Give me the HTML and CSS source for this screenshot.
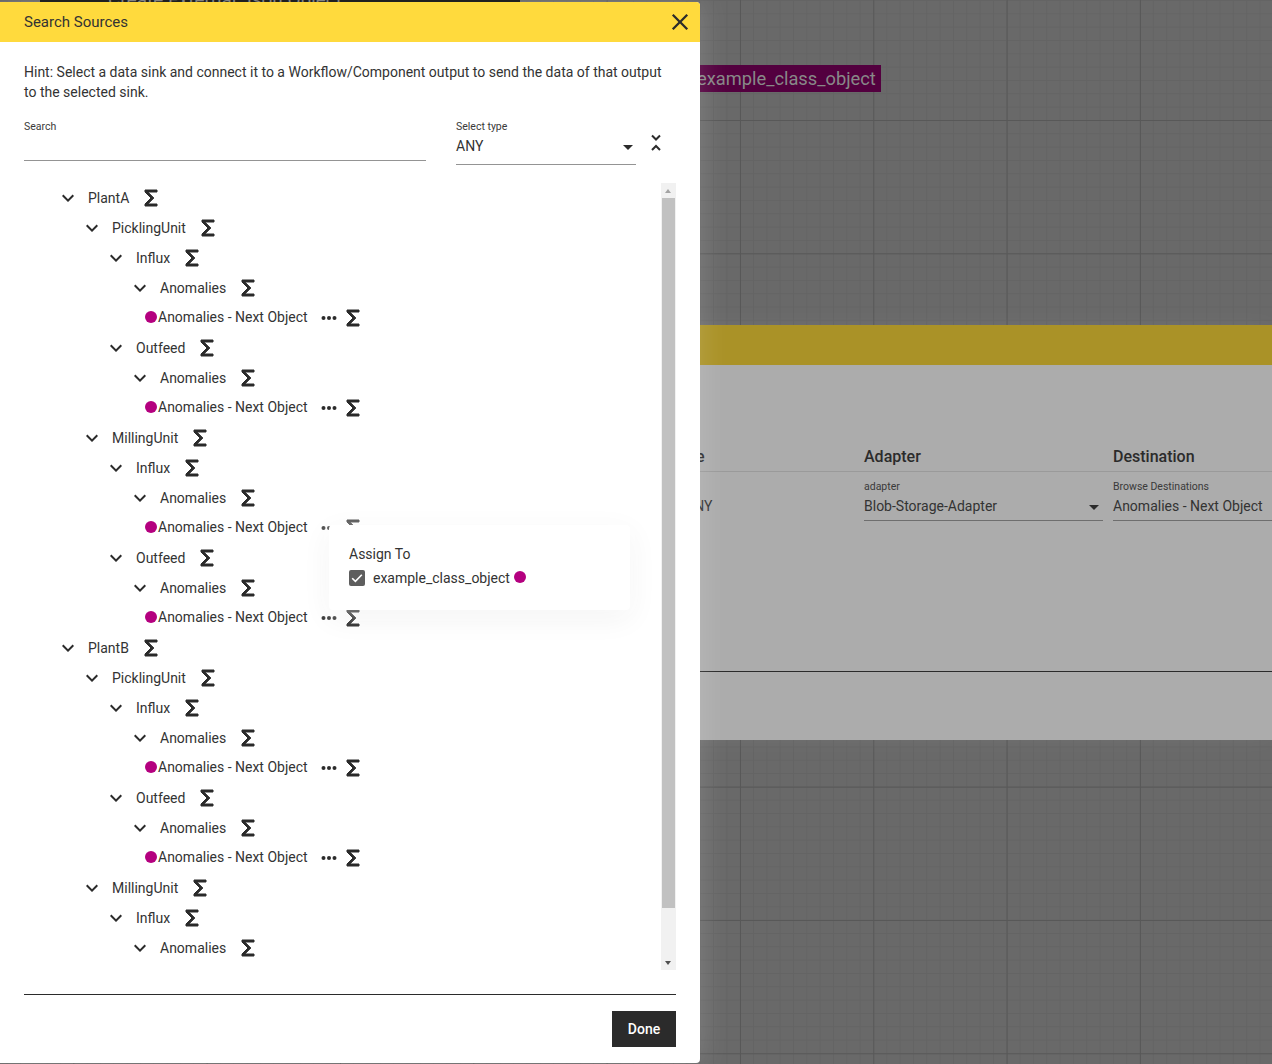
FILE: index.html
```html
<!DOCTYPE html>
<html lang="en">
<head>
    <meta charset="UTF-8">
    <meta name="viewport" content="width=device-width, initial-scale=1.0">
    <title>Search Sources</title>
    <link rel="stylesheet" href="styles.css">
</head>
<body>
    <svg class="defs" width="0" height="0">
        <symbol id="sigma" viewBox="0 0 24 24"><path d="M18 6H8.83l6 6-6 6H18v2H6v-2l6-6-6-6V4h12z"/></symbol>
        <symbol id="chevron" viewBox="0 0 24 24"><path d="M16.59 8.59 12 13.17 7.41 8.59 6 10l6 6 6-6z"/></symbol>
        <symbol id="dots" viewBox="0 0 24 24"><circle cx="6" cy="12" r="2.2"/><circle cx="12" cy="12" r="2.2"/><circle cx="18" cy="12" r="2.2"/></symbol>
    </svg>

    <!-- page behind the dialog -->
    <div class="topbar"><span>Create External Json Object</span></div>
    <div class="tag">example_class_object</div>

    <section class="panel">
        <div class="panel-head"></div>
        <div class="panel-body">
            <div class="panel-cols">
                <div class="col col-type">
                    <h3>Type</h3>
                    <div class="cell"><div class="value">ANY</div></div>
                </div>
                <div class="col col-adapter">
                    <h3>Adapter</h3>
                    <div class="cell">
                        <label>adapter</label>
                        <div class="value underlined">Blob-Storage-Adapter<i class="arrow"></i></div>
                    </div>
                </div>
                <div class="col col-dest">
                    <h3>Destination</h3>
                    <div class="cell">
                        <label>Browse Destinations</label>
                        <div class="value underlined">Anomalies - Next Object</div>
                    </div>
                </div>
            </div>
            <div class="panel-rule"></div>
        </div>
    </section>

    <!-- dialog -->
    <div class="dialog">
        <header class="dialog-head">
            <span>Search Sources</span>
            <svg class="close" viewBox="0 0 24 24"><path d="M19 6.41 17.59 5 12 10.59 6.41 5 5 6.41 10.59 12 5 17.59 6.41 19 12 13.41 17.59 19 19 17.59 13.41 12z"/></svg>
        </header>
        <div class="dialog-body">
            <p class="hint">Hint: Select a data sink and connect it to a Workflow/Component output to send the data of that output to the selected sink.</p>

            <div class="filters">
                <div class="field field-search">
                    <label>Search</label>
                    <div class="input"></div>
                </div>
                <div class="field field-type">
                    <label>Select type</label>
                    <div class="input">ANY<i class="arrow"></i></div>
                </div>
                <svg class="unfold" viewBox="0 0 12 20"><path d="M2 2.5 6 6.5 10 2.5M2 17 6 13 10 17"/></svg>
            </div>

            <div class="tree-wrap">
                <div class="tree">
                    <div class="row l0"><svg class="chev"><use href="#chevron"/></svg><span>PlantA</span><svg class="sig"><use href="#sigma"/></svg></div>
                    <div class="row l1"><svg class="chev"><use href="#chevron"/></svg><span>PicklingUnit</span><svg class="sig"><use href="#sigma"/></svg></div>
                    <div class="row l2"><svg class="chev"><use href="#chevron"/></svg><span>Influx</span><svg class="sig"><use href="#sigma"/></svg></div>
                    <div class="row l3"><svg class="chev"><use href="#chevron"/></svg><span>Anomalies</span><svg class="sig"><use href="#sigma"/></svg></div>
                    <div class="row leaf"><i class="dot"></i><span>Anomalies - Next Object</span><svg class="more"><use href="#dots"/></svg><svg class="sig"><use href="#sigma"/></svg></div>
                    <div class="row l2"><svg class="chev"><use href="#chevron"/></svg><span>Outfeed</span><svg class="sig"><use href="#sigma"/></svg></div>
                    <div class="row l3"><svg class="chev"><use href="#chevron"/></svg><span>Anomalies</span><svg class="sig"><use href="#sigma"/></svg></div>
                    <div class="row leaf"><i class="dot"></i><span>Anomalies - Next Object</span><svg class="more"><use href="#dots"/></svg><svg class="sig"><use href="#sigma"/></svg></div>
                    <div class="row l1"><svg class="chev"><use href="#chevron"/></svg><span>MillingUnit</span><svg class="sig"><use href="#sigma"/></svg></div>
                    <div class="row l2"><svg class="chev"><use href="#chevron"/></svg><span>Influx</span><svg class="sig"><use href="#sigma"/></svg></div>
                    <div class="row l3"><svg class="chev"><use href="#chevron"/></svg><span>Anomalies</span><svg class="sig"><use href="#sigma"/></svg></div>
                    <div class="row leaf"><i class="dot"></i><span>Anomalies - Next Object</span><svg class="more"><use href="#dots"/></svg><svg class="sig"><use href="#sigma"/></svg></div>
                    <div class="row l2"><svg class="chev"><use href="#chevron"/></svg><span>Outfeed</span><svg class="sig"><use href="#sigma"/></svg></div>
                    <div class="row l3"><svg class="chev"><use href="#chevron"/></svg><span>Anomalies</span><svg class="sig"><use href="#sigma"/></svg></div>
                    <div class="row leaf"><i class="dot"></i><span>Anomalies - Next Object</span><svg class="more"><use href="#dots"/></svg><svg class="sig"><use href="#sigma"/></svg></div>
                    <div class="row l0"><svg class="chev"><use href="#chevron"/></svg><span>PlantB</span><svg class="sig"><use href="#sigma"/></svg></div>
                    <div class="row l1"><svg class="chev"><use href="#chevron"/></svg><span>PicklingUnit</span><svg class="sig"><use href="#sigma"/></svg></div>
                    <div class="row l2"><svg class="chev"><use href="#chevron"/></svg><span>Influx</span><svg class="sig"><use href="#sigma"/></svg></div>
                    <div class="row l3"><svg class="chev"><use href="#chevron"/></svg><span>Anomalies</span><svg class="sig"><use href="#sigma"/></svg></div>
                    <div class="row leaf"><i class="dot"></i><span>Anomalies - Next Object</span><svg class="more"><use href="#dots"/></svg><svg class="sig"><use href="#sigma"/></svg></div>
                    <div class="row l2"><svg class="chev"><use href="#chevron"/></svg><span>Outfeed</span><svg class="sig"><use href="#sigma"/></svg></div>
                    <div class="row l3"><svg class="chev"><use href="#chevron"/></svg><span>Anomalies</span><svg class="sig"><use href="#sigma"/></svg></div>
                    <div class="row leaf"><i class="dot"></i><span>Anomalies - Next Object</span><svg class="more"><use href="#dots"/></svg><svg class="sig"><use href="#sigma"/></svg></div>
                    <div class="row l1"><svg class="chev"><use href="#chevron"/></svg><span>MillingUnit</span><svg class="sig"><use href="#sigma"/></svg></div>
                    <div class="row l2"><svg class="chev"><use href="#chevron"/></svg><span>Influx</span><svg class="sig"><use href="#sigma"/></svg></div>
                    <div class="row l3"><svg class="chev"><use href="#chevron"/></svg><span>Anomalies</span><svg class="sig"><use href="#sigma"/></svg></div>
                </div>
                <div class="scrollbar">
                    <div class="sb-btn sb-up"></div>
                    <div class="sb-track"><div class="sb-thumb"></div></div>
                    <div class="sb-btn sb-down"></div>
                </div>
            </div>

            <div class="dialog-foot">
                <button class="done">Done</button>
            </div>
        </div>

        <div class="popup">
            <div class="popup-title">Assign To</div>
            <div class="popup-item">
                <span class="check"><svg viewBox="0 0 16 16"><path d="M3.2 8.2 6.4 11.4 12.8 4.8"/></svg></span>
                <span>example_class_object</span>
                <i class="dot"></i>
            </div>
        </div>
    </div>
</body>
</html>
```

FILE: styles.css
```css
* {
    box-sizing: border-box;
}
html, body {
    margin: 0;
    height: 100%;
}
body {
    position: relative;
    width: 1272px;
    height: 1064px;
    overflow: hidden;
    font-family: Roboto, "Liberation Sans", sans-serif;
    font-size: 14px;
    color: #333;
    background-color: #696969;
    background-image:
        linear-gradient(#585858 1px, transparent 1px),
        linear-gradient(90deg, #585858 1px, transparent 1px),
        linear-gradient(#646464 1px, transparent 1px),
        linear-gradient(90deg, #646464 1px, transparent 1px);
    background-size: 133.33px 133.33px, 133.33px 133.33px, 13.333px 13.333px, 13.333px 13.333px;
    background-position: 0 120px, 73.33px 0, 0 0, 6.67px 0;
}
.defs {
    position: absolute;
}

/* page behind */
.topbar {
    position: absolute;
    left: 40px;
    top: 0;
    width: 480px;
    height: 2px;
    overflow: hidden;
    background: #0b0b0b;
    color: #777;
    font-size: 19px;
    line-height: 0;
    padding-left: 68px;
}
.tag {
    position: absolute;
    left: 690px;
    top: 65px;
    width: 191px;
    height: 27px;
    padding-left: 7px;
    background: #53003f;
    color: #888;
    font-size: 18.3px;
    line-height: 27px;
    white-space: nowrap;
}
.panel {
    position: absolute;
    left: 0;
    right: 0;
    top: 325px;
    height: 415px;
    background: #acacac;
    box-shadow: 0 0 20px rgba(255, 255, 255, .06);
}
.panel-head {
    height: 40px;
    background: #aa9227;
}
.panel-body {
    padding-top: 78px;
}
.panel-cols {
    display: flex;
    height: 228px;
}
.col h3 {
    margin: 0;
    height: 28px;
    font-size: 16px;
    font-weight: 500;
    line-height: 27px;
    white-space: nowrap;
    color: #2b2b2b;
}
.col .cell {
    border-top: 1px solid #9a9a9a;
    padding-top: 8px;
    height: 50px;
}
.col label {
    display: block;
    height: 13px;
    font-size: 10.5px;
    line-height: 13px;
    color: #3a3a3a;
}
.col .value {
    position: relative;
    height: 28px;
    line-height: 26px;
    font-size: 14px;
}
.col-type {
    width: 864px;
    padding-left: 685px;
}
.col-type h3 {
    margin-left: -15px;
}
.col-type .value {
    margin-top: 13px;
}
.col-adapter {
    width: 249px;
}
.col-adapter .value {
    width: 239px;
}
.col-dest {
    flex: 1;
}
.underlined {
    border-bottom: 1px solid #6e6e6e;
}
.arrow {
    position: absolute;
    right: 4px;
    top: 12px;
    border-left: 5px solid transparent;
    border-right: 5px solid transparent;
    border-top: 5px solid #2b2b2b;
}
.panel-rule {
    height: 1px;
    background: #2b2b2b;
}

/* dialog */
.dialog {
    position: absolute;
    left: 0;
    top: 2px;
    width: 700px;
    height: 1061px;
    background: #fff;
    border-radius: 0 4px 4px 0;
    box-shadow: 0 0 30px rgba(255, 255, 255, .18);
}
.dialog-head {
    display: flex;
    align-items: center;
    justify-content: space-between;
    height: 40px;
    padding: 0 8px 0 24px;
    background: #ffda3d;
    border-radius: 0 4px 0 0;
    font-size: 15px;
}
.close {
    width: 24px;
    height: 24px;
    fill: #2b2b2b;
    transform: scale(1.15);
}
.dialog-body {
    padding: 0 24px;
}
.hint {
    margin: 0;
    padding-top: 20px;
    line-height: 20px;
}
.filters {
    display: flex;
    align-items: flex-start;
    margin-top: 18px;
}
.field label {
    display: block;
    font-size: 10.5px;
    line-height: 13px;
    color: #3a3a3a;
}
.field .input {
    position: relative;
    line-height: 26px;
    font-size: 14px;
    border-bottom: 1px solid #949494;
}
.field-search {
    width: 402px;
    margin-right: 30px;
}
.field-search .input {
    height: 28px;
}
.field-type {
    width: 180px;
}
.field-type .input {
    height: 32px;
}
.field-type .arrow {
    right: 3px;
    top: 12px;
}
.unfold {
    width: 12px;
    height: 20px;
    margin: 13px 0 0 14px;
    fill: none;
    stroke: #2b2b2b;
    stroke-width: 2;
}
.tree-wrap {
    display: flex;
    height: 787px;
    margin-top: 18px;
}
.tree {
    flex: 1;
    overflow: hidden;
}
.row {
    display: flex;
    align-items: center;
    height: 30px;
    white-space: nowrap;
}
.row.l0 { padding-left: 32px; }
.row.l1 { padding-left: 56px; }
.row.l2 { padding-left: 80px; }
.row.l3 { padding-left: 104px; }
.row.leaf {
    padding-left: 121px;
}
.row.leaf span, .row.leaf .dot {
    margin-bottom: 2px;
}
.chev {
    width: 24px;
    height: 24px;
    margin-right: 8px;
    fill: #2b2b2b;
}
.row .sig {
    width: 24px;
    height: 24px;
    margin-left: 10px;
    fill: #2b2b2b;
    stroke: #2b2b2b;
    stroke-width: 1;
}
.row .more {
    width: 22px;
    height: 22px;
    margin-left: 10px;
    fill: #2b2b2b;
}
.row.leaf .sig {
    margin-left: 1px;
}
.dot {
    display: inline-block;
    width: 12px;
    height: 12px;
    border-radius: 50%;
    background: #b4007f;
}
.row .dot {
    margin-right: 1px;
}
.scrollbar {
    display: flex;
    flex-direction: column;
    width: 15px;
    background: #f1f1f1;
}
.sb-btn {
    position: relative;
    height: 15px;
}
.sb-up::after, .sb-down::after {
    content: "";
    position: absolute;
    left: 4px;
    top: 6px;
    border-left: 3.5px solid transparent;
    border-right: 3.5px solid transparent;
}
.sb-up::after {
    border-bottom: 4px solid #a3a3a3;
}
.sb-down::after {
    border-top: 4px solid #505050;
}
.sb-track {
    flex: 1;
    padding: 0 1px;
}
.sb-thumb {
    height: 710px;
    background: #c1c1c1;
}
.dialog-foot {
    margin-top: 24px;
    padding-top: 16px;
    border-top: 1px solid #2b2b2b;
    display: flex;
    justify-content: flex-end;
}
.done {
    width: 64px;
    height: 36px;
    border: none;
    border-radius: 0;
    background: #2b2b2b;
    color: #fff;
    font-family: inherit;
    font-size: 14px;
    font-weight: 500;
}

/* popup menu over the tree */
.popup {
    position: absolute;
    left: 329px;
    top: 523px;
    width: 301px;
    height: 85px;
    padding: 19px 20px 0;
    background: #fff;
    border-radius: 4px;
    box-shadow: 0 0 18px 8px rgba(255, 255, 255, .4), 0 8px 30px rgba(0, 0, 0, .06);
}
.popup-title {
    line-height: 20px;
}
.popup-item {
    display: flex;
    align-items: center;
    margin-top: 4px;
    height: 20px;
}
.check {
    width: 16px;
    height: 16px;
    margin-right: 8px;
    background: #5e5e5e;
    border-radius: 2px;
}
.check svg {
    display: block;
    fill: none;
    stroke: #fff;
    stroke-width: 1.6;
}
.popup-item .dot {
    margin: -3px 0 0 4px;
}
```
